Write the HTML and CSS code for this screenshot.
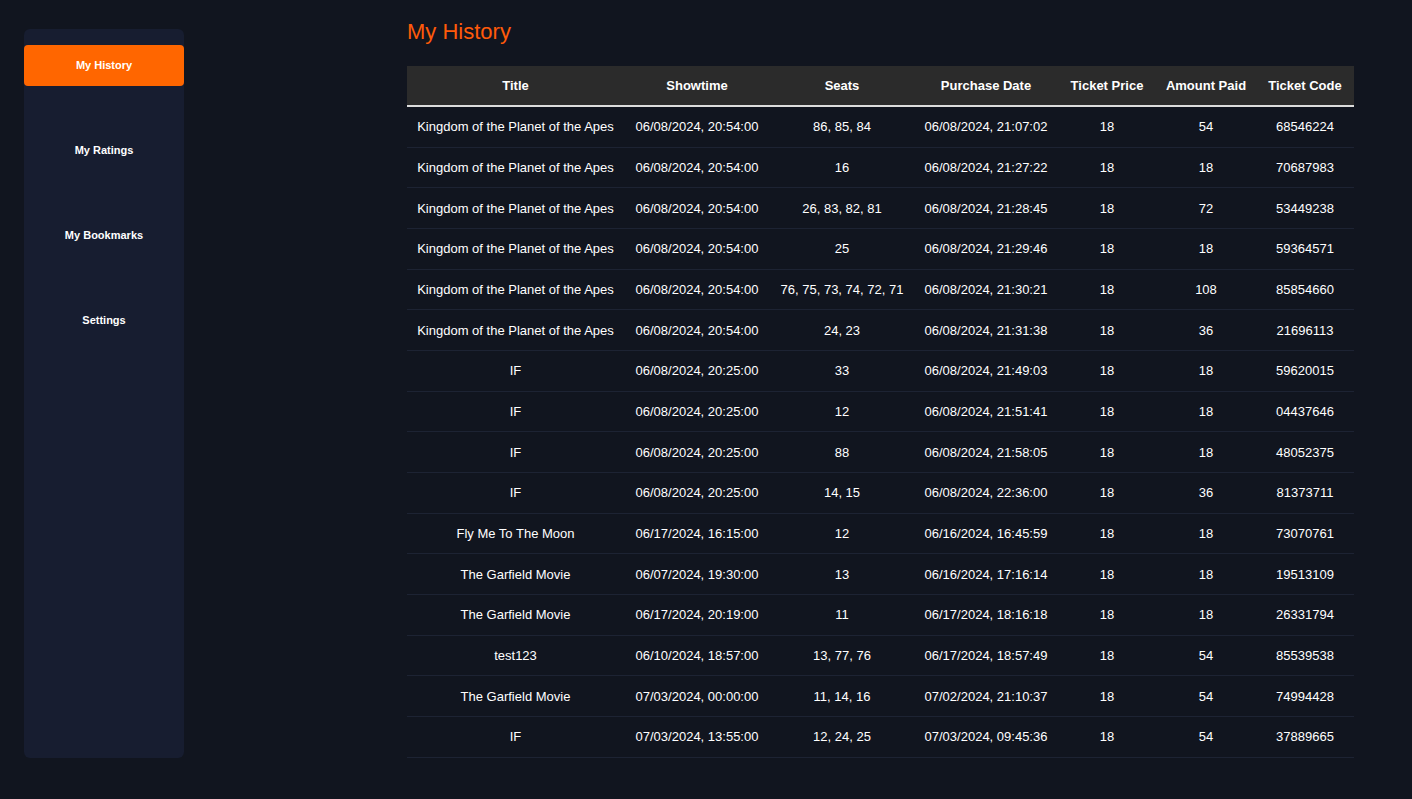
FILE: index.html
```html
<!DOCTYPE html>
<html>
<head>
<meta charset="utf-8">
<link rel="stylesheet" href="styles.css">
</head>
<body>
<div class="layout">
  <nav class="sidebar">
    <a class="nav-item active">My History</a>
    <a class="nav-item">My Ratings</a>
    <a class="nav-item">My Bookmarks</a>
    <a class="nav-item">Settings</a>
  </nav>
  <main class="main">
    <h1 class="title">My History</h1>
    <table class="history">
      <colgroup>
        <col style="width:217px"><col style="width:146px"><col style="width:144px"><col style="width:144px"><col style="width:98px"><col style="width:100px"><col style="width:98px">
      </colgroup>
      <thead>
        <tr><th>Title</th><th>Showtime</th><th>Seats</th><th>Purchase Date</th><th>Ticket Price</th><th>Amount Paid</th><th>Ticket Code</th></tr>
      </thead>
      <tbody>
        <tr><td>Kingdom of the Planet of the Apes</td><td>06/08/2024, 20:54:00</td><td>86, 85, 84</td><td>06/08/2024, 21:07:02</td><td>18</td><td>54</td><td>68546224</td></tr>
        <tr><td>Kingdom of the Planet of the Apes</td><td>06/08/2024, 20:54:00</td><td>16</td><td>06/08/2024, 21:27:22</td><td>18</td><td>18</td><td>70687983</td></tr>
        <tr><td>Kingdom of the Planet of the Apes</td><td>06/08/2024, 20:54:00</td><td>26, 83, 82, 81</td><td>06/08/2024, 21:28:45</td><td>18</td><td>72</td><td>53449238</td></tr>
        <tr><td>Kingdom of the Planet of the Apes</td><td>06/08/2024, 20:54:00</td><td>25</td><td>06/08/2024, 21:29:46</td><td>18</td><td>18</td><td>59364571</td></tr>
        <tr><td>Kingdom of the Planet of the Apes</td><td>06/08/2024, 20:54:00</td><td>76, 75, 73, 74, 72, 71</td><td>06/08/2024, 21:30:21</td><td>18</td><td>108</td><td>85854660</td></tr>
        <tr><td>Kingdom of the Planet of the Apes</td><td>06/08/2024, 20:54:00</td><td>24, 23</td><td>06/08/2024, 21:31:38</td><td>18</td><td>36</td><td>21696113</td></tr>
        <tr><td>IF</td><td>06/08/2024, 20:25:00</td><td>33</td><td>06/08/2024, 21:49:03</td><td>18</td><td>18</td><td>59620015</td></tr>
        <tr><td>IF</td><td>06/08/2024, 20:25:00</td><td>12</td><td>06/08/2024, 21:51:41</td><td>18</td><td>18</td><td>04437646</td></tr>
        <tr><td>IF</td><td>06/08/2024, 20:25:00</td><td>88</td><td>06/08/2024, 21:58:05</td><td>18</td><td>18</td><td>48052375</td></tr>
        <tr><td>IF</td><td>06/08/2024, 20:25:00</td><td>14, 15</td><td>06/08/2024, 22:36:00</td><td>18</td><td>36</td><td>81373711</td></tr>
        <tr><td>Fly Me To The Moon</td><td>06/17/2024, 16:15:00</td><td>12</td><td>06/16/2024, 16:45:59</td><td>18</td><td>18</td><td>73070761</td></tr>
        <tr><td>The Garfield Movie</td><td>06/07/2024, 19:30:00</td><td>13</td><td>06/16/2024, 17:16:14</td><td>18</td><td>18</td><td>19513109</td></tr>
        <tr><td>The Garfield Movie</td><td>06/17/2024, 20:19:00</td><td>11</td><td>06/17/2024, 18:16:18</td><td>18</td><td>18</td><td>26331794</td></tr>
        <tr><td>test123</td><td>06/10/2024, 18:57:00</td><td>13, 77, 76</td><td>06/17/2024, 18:57:49</td><td>18</td><td>54</td><td>85539538</td></tr>
        <tr><td>The Garfield Movie</td><td>07/03/2024, 00:00:00</td><td>11, 14, 16</td><td>07/02/2024, 21:10:37</td><td>18</td><td>54</td><td>74994428</td></tr>
        <tr><td>IF</td><td>07/03/2024, 13:55:00</td><td>12, 24, 25</td><td>07/03/2024, 09:45:36</td><td>18</td><td>54</td><td>37889665</td></tr>
      </tbody>
    </table>
  </main>
</div>
</body>
</html>
```
FILE: styles.css
```css
html, body {
  margin: 0;
  padding: 0;
  background: #11151f;
  font-family: "Liberation Sans", Arial, sans-serif;
  color: #ffffff;
}
.layout {
  display: flex;
  align-items: flex-start;
  padding-left: 24px;
  gap: 223px;
}
.sidebar {
  margin-top: 29px;
  width: 160px;
  height: 729px;
  box-sizing: border-box;
  background: #171d30;
  border-radius: 6px;
  padding-top: 16px;
  display: flex;
  flex-direction: column;
  gap: 44px;
}
.nav-item {
  display: flex;
  align-items: center;
  justify-content: center;
  height: 41px;
  font-size: 11px;
  font-weight: bold;
  color: #ffffff;
  border-radius: 4px;
  line-height: 12px;
  padding-bottom: 1px;
  box-sizing: border-box;
}
.nav-item.active {
  background: #ff6600;
}
.main {
  width: 947px;
}
.title {
  margin: 19px 0 21px 0;
  font-size: 22px;
  font-weight: normal;
  line-height: 26px;
  color: #ff5a0a;
}
.history {
  width: 947px;
  border-collapse: collapse;
  table-layout: fixed;
  font-size: 13px;
}
.history th {
  height: 39px;
  background: #2b2b2b;
  font-weight: bold;
  border-bottom: 2px solid #dcdcdc;
  padding: 0;
  text-align: center;
}
.history td {
  height: 39.67px;
  padding: 0;
  text-align: center;
  border-bottom: 1px solid #1d2333;
}
```
